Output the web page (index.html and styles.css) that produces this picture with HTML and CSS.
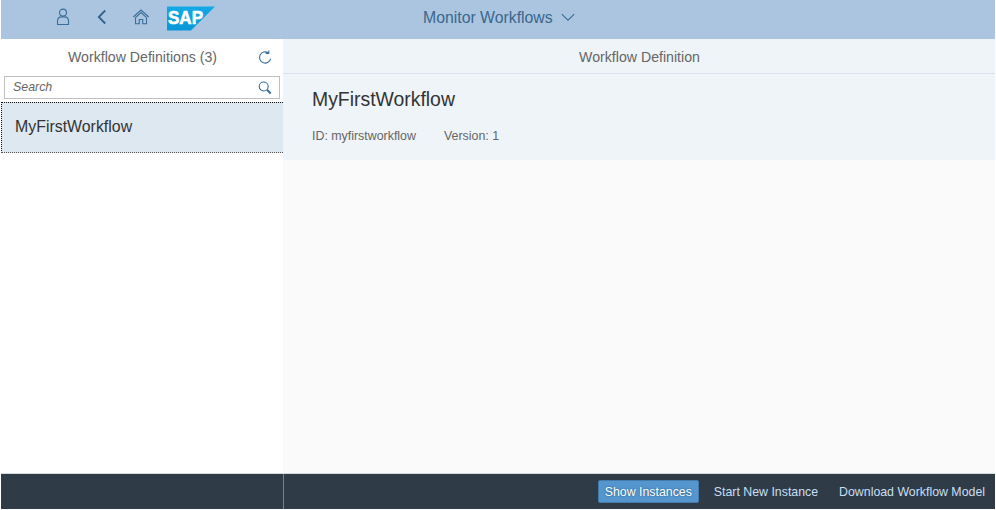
FILE: index.html
```html
<!DOCTYPE html>
<html lang="en">
<head>
<meta charset="utf-8">
<title>Monitor Workflows</title>
<link rel="stylesheet" href="styles.css">
</head>
<body>
<div class="app">
  <header class="shell">
    <nav class="shell-nav">
      <svg class="icon user" width="16" height="20" viewBox="0 0 16 20"><circle cx="8" cy="5.6" r="3.5"/><path d="M2.5 17.5v-3.4q0-4.2 4-4.2h3q4 0 4 4.2v3.4z"/></svg>
      <svg class="icon back" width="10" height="16" viewBox="0 0 10 16"><path d="M8.2 1.5 1.8 8l6.4 6.5"/></svg>
      <svg class="icon home" width="18" height="18" viewBox="0 0 18 18"><path d="M1.3 9 9 2l7.7 7M3.5 9.5v6.2h3.8v-4.2h3.4v4.2h3.8V9.5M3.4 9.7 9 4.6l5.6 5.1"/></svg>
      <svg class="logo" width="48" height="25" viewBox="0 0 48 25"><defs><linearGradient id="g" x1="0" y1="0" x2="0" y2="1"><stop offset="0" stop-color="#12aae5"/><stop offset="1" stop-color="#0b96d8"/></linearGradient></defs><path d="M0 .5h48L24 24.5H0z" fill="url(#g)"/><text x="1" y="18.3" textLength="35" lengthAdjust="spacingAndGlyphs">SAP</text></svg>
    </nav>
    <div class="shell-title"><span>Monitor Workflows</span><svg class="icon chevron" width="14" height="9" viewBox="0 0 14 9"><path d="m.8 1.2 6.2 6 6.2-6"/></svg></div>
  </header>
  <main class="split">
    <aside class="master">
      <div class="master-head"><h2>Workflow Definitions (3)</h2>
        <svg class="icon refresh" width="14" height="15" viewBox="0 0 14 15"><path d="M10.2 2.8A5.6 5.6 0 1 0 12.6 8.6M7.7 3.4h3.1V.4"/></svg>
      </div>
      <div class="search"><span>Search</span>
        <svg class="icon" width="14" height="14" viewBox="0 0 14 14"><circle cx="5.7" cy="5.5" r="4.5"/><path class="handle" d="m9 8.8 3.7 3.7"/></svg>
      </div>
      <div class="item">MyFirstWorkflow</div>
    </aside>
    <section class="detail">
      <div class="detail-head">Workflow Definition</div>
      <div class="object">
        <h1>MyFirstWorkflow</h1>
        <div class="attributes"><span>ID: myfirstworkflow</span><span>Version: 1</span></div>
      </div>
    </section>
  </main>
  <footer class="footer">
    <div class="footer-left"></div>
    <div class="actions"><button class="primary">Show Instances</button><button class="start">Start New Instance</button><button>Download Workflow Model</button></div>
  </footer>
</div>
</body>
</html>
```
FILE: styles.css
```css
* { box-sizing: border-box; }
body { margin: 0; background: #fff; font-family: "Liberation Sans", Arial, sans-serif; }
h1, h2 { margin: 0; font-weight: 400; }
.app { width: 994px; height: 509px; margin-left: 1px; display: flex; flex-direction: column; }
.icon { display: block; fill: none; stroke: #3a6e99; stroke-width: 1.1; }
.shell { height: 39px; display: flex; background: #abc5e0; }
.shell-nav { width: 422px; padding-left: 54px; display: flex; align-items: flex-start; }
.user { margin-top: 7px; }
.back { margin: 9px 0 0 26px; stroke: #2f628d; stroke-width: 1.8; }
.home { margin: 8px 0 0 25px; }
.logo { margin: 6px 0 0 17px; }
.logo text { fill: #fff; stroke: #fff; stroke-width: .6; font-weight: 700; font-size: 18px; }
.shell-title { display: flex; align-items: flex-start; color: #3a678d; font-size: 15.8px; line-height: 35px; }
.chevron { margin: 13px 0 0 8px; }
.split { flex: 1; display: flex; min-height: 0; }
.master { width: 282px; background: #fff; }
.master-head { height: 37px; display: flex; align-items: flex-start; padding-left: 67px; color: #666; }
h2 { width: 190px; font-size: 14.15px; line-height: 36px; }
.refresh { margin-top: 11px; }
.search { width: 276px; height: 23px; margin-left: 3px; padding: 0 7px 0 8px; border: 1px solid #bfbfbf; display: flex; align-items: center; justify-content: space-between; color: #666; font-size: 12.4px; font-style: italic; }
.search span { margin-top: -2px; }
.search .handle { stroke-width: 2; }
.item { height: 51px; margin-top: 3px; padding-left: 13px; border: 1px dotted #111; border-right: 0; border-bottom-color: #555; background: #dde8f1; color: #333; font-size: 15.9px; line-height: 47px; }
.detail { flex: 1; background: #fafafa; }
.detail-head { height: 35px; padding-left: 1px; border-bottom: 1px solid #d7e2ee; background: #eff4f9; color: #666; font-size: 14.15px; line-height: 36px; text-align: center; }
.object { height: 86px; padding: 13px 0 0 29px; background: #eff4f9; color: #666; }
h1 { color: #333; font-size: 19.4px; line-height: 25px; }
.attributes { margin-top: 16px; display: flex; gap: 28px; font-size: 12.4px; line-height: 16px; }
.footer { height: 36px; border-top: 1px solid #d7dadd; display: flex; background: #2f3c48; }
.footer-left { width: 283px; border-right: 1px solid #77828b; }
.actions { flex: 1; display: flex; align-items: center; justify-content: flex-end; padding-right: 10px; }
button { height: 23px; padding: 0; border: 0; background: none; color: #c9dff3; font: 12.35px "Liberation Sans", Arial, sans-serif; white-space: nowrap; }
.primary { width: 101px; border: 1px solid #427cac; border-radius: 2px; background: #5496cd; color: #fff; text-shadow: 0 0 2px #245580; }
.start { margin: 0 21px 0 15px; }
```
